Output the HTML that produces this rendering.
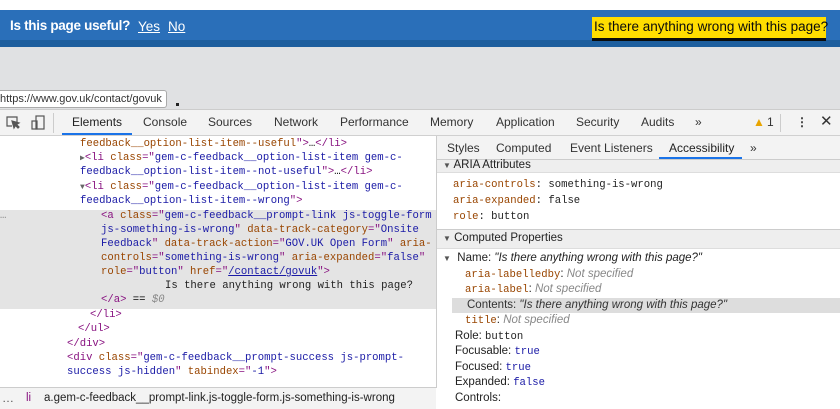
<!DOCTYPE html>
<html><head><meta charset="utf-8"><style>
*{margin:0;padding:0;box-sizing:border-box}
body{width:840px;height:409px;overflow:hidden;background:#fff;position:relative;font-family:"Liberation Sans",sans-serif}
.a{position:absolute;white-space:pre}
.m{font-family:"Liberation Mono",monospace;font-size:10.6px}
.t{color:#881280}.n{color:#994500}.v{color:#1a1aa6}.k{color:#222}
.tab{position:absolute;top:115px;font-size:12px;color:#333}
.rt{position:absolute;top:141px;font-size:12px;color:#333}
.r{position:absolute;font-size:11.5px;color:#222;white-space:pre}
.g{color:#888;font-style:italic}
</style></head><body>
<!-- page -->
<div class="a" style="left:0;top:10px;width:840px;height:31px;background:#2a6fb9"></div>
<div class="a" style="left:0;top:40px;width:840px;height:7px;background:#1d5e9e"></div>
<div class="a" style="left:0;top:47px;width:840px;height:63px;background:#e0e1e3"></div>
<div class="a" style="left:10px;top:18px;font-size:13.5px;font-weight:bold;color:#fff;letter-spacing:-0.3px">Is this page useful?</div>
<div class="a" style="left:138px;top:19px;font-size:13.5px;color:#fff;text-decoration:underline">Yes</div>
<div class="a" style="left:168px;top:19px;font-size:13.5px;color:#fff;text-decoration:underline">No</div>
<div class="a" style="left:592px;top:17px;width:234px;height:21px;background:#ffdd00;box-shadow:0 3px 0 #0b0c0c"></div>
<div class="a" style="left:594px;top:19px;font-size:13.5px;color:#0b0c0c">Is there anything wrong with this page?</div>
<div class="a" style="left:0;top:90px;width:167px;height:18px;background:#fff;border:1px solid #aaa;border-left:none;border-radius:0 3px 3px 0"></div>
<div class="a" style="left:0;top:93px;font-size:11px;color:#333">https://www.gov.uk/contact/govuk</div>
<div class="a" style="left:176px;top:103px;width:3px;height:3px;background:#222"></div>
<!-- toolbar -->
<div class="a" style="left:0;top:109px;width:840px;height:27px;background:#f3f3f3;border-top:1px solid #ccc;border-bottom:1px solid #d0d0d0"></div>
<svg class="a" style="left:3px;top:114px" width="46" height="18" viewBox="0 0 46 18" fill="none" stroke="#555" stroke-width="1.2"><path d="M9 12H4V3h10v5"/><path d="M9 7l2 7 1.5-2.5L15 14l1-1-2.5-2.5L16 9z" fill="#555"/><rect x="33" y="2" width="8" height="13"/><rect x="29" y="7" width="5" height="8"/></svg>
<div class="a" style="left:53px;top:113px;width:1px;height:20px;background:#ccc"></div>
<div class="tab" style="left:72px;color:#222">Elements</div>
<div class="a" style="left:62px;top:133px;width:70px;height:2px;background:#1a73e8"></div>
<div class="tab" style="left:143px">Console</div>
<div class="tab" style="left:208px">Sources</div>
<div class="tab" style="left:274px">Network</div>
<div class="tab" style="left:340px">Performance</div>
<div class="tab" style="left:430px">Memory</div>
<div class="tab" style="left:496px">Application</div>
<div class="tab" style="left:576px">Security</div>
<div class="tab" style="left:641px">Audits</div>
<div class="tab" style="left:695px">»</div>
<div class="tab" style="left:753px;color:#e8a400">▲</div>
<div class="tab" style="left:767px">1</div>
<div class="a" style="left:780px;top:114px;width:1px;height:18px;background:#ccc"></div>
<div class="tab" style="left:796px;font-weight:bold">⋮</div>
<div class="tab" style="left:820px;font-size:15px;top:112px">✕</div>
<!-- left pane -->
<div class="a" style="left:0;top:210px;width:436px;height:99px;background:#e4e4e4"></div>
<div class="a" style="left:436px;top:136px;width:1px;height:252px;background:#ccc"></div>
<div class="a m" style="left:80px;top:138px"><span class="n">feedback__option-list-item--useful</span><span class="t">"&gt;</span>…<span class="t">&lt;/li&gt;</span></div>
<div class="a m" style="left:80px;top:152px"><span style="font-size:8px;color:#666">▶</span><span class="t">&lt;li </span><span class="n">class</span><span class="t">="</span><span class="v">gem-c-feedback__option-list-item gem-c-</span></div>
<div class="a m" style="left:80px;top:166px"><span class="v">feedback__option-list-item--not-useful</span><span class="t">"&gt;</span>…<span class="t">&lt;/li&gt;</span></div>
<div class="a m" style="left:80px;top:181px"><span style="font-size:8px;color:#666">▼</span><span class="t">&lt;li </span><span class="n">class</span><span class="t">="</span><span class="v">gem-c-feedback__option-list-item gem-c-</span></div>
<div class="a m" style="left:80px;top:195px"><span class="v">feedback__option-list-item--wrong</span><span class="t">"&gt;</span></div>
<div class="a m" style="left:0;top:210px;color:#888">…</div>
<div class="a m" style="left:101px;top:210px"><span class="t">&lt;a </span><span class="n">class</span><span class="t">="</span><span class="v">gem-c-feedback__prompt-link js-toggle-form</span></div>
<div class="a m" style="left:101px;top:224px"><span class="v">js-something-is-wrong</span><span class="t">" </span><span class="n">data-track-category</span><span class="t">="</span><span class="v">Onsite</span></div>
<div class="a m" style="left:101px;top:238px"><span class="v">Feedback</span><span class="t">" </span><span class="n">data-track-action</span><span class="t">="</span><span class="v">GOV.UK Open Form</span><span class="t">" </span><span class="n">aria-</span></div>
<div class="a m" style="left:101px;top:252px"><span class="n">controls</span><span class="t">="</span><span class="v">something-is-wrong</span><span class="t">" </span><span class="n">aria-expanded</span><span class="t">="</span><span class="v">false</span><span class="t">"</span></div>
<div class="a m" style="left:101px;top:266px"><span class="n">role</span><span class="t">="</span><span class="v">button</span><span class="t">" </span><span class="n">href</span><span class="t">="</span><span class="v" style="text-decoration:underline;color:#1a1aa6">/contact/govuk</span><span class="t">"&gt;</span></div>
<div class="a m k" style="left:165px;top:280px">Is there anything wrong with this page?</div>
<div class="a m" style="left:101px;top:294px"><span class="t">&lt;/a&gt;</span> == <span class="g">$0</span></div>
<div class="a m t" style="left:90px;top:309px">&lt;/li&gt;</div>
<div class="a m t" style="left:78px;top:323px">&lt;/ul&gt;</div>
<div class="a m t" style="left:67px;top:338px">&lt;/div&gt;</div>
<div class="a m" style="left:67px;top:352px"><span class="t">&lt;div </span><span class="n">class</span><span class="t">="</span><span class="v">gem-c-feedback__prompt-success js-prompt-</span></div>
<div class="a m" style="left:67px;top:366px"><span class="v">success js-hidden</span><span class="t">" </span><span class="n">tabindex</span><span class="t">="</span><span class="v">-1</span><span class="t">"&gt;</span></div>
<!-- breadcrumb -->
<div class="a" style="left:0;top:387px;width:436px;height:22px;background:#f3f3f3;border-top:1px solid #ccc"></div>
<div class="a" style="left:2px;top:391px;font-size:12px;color:#555">…</div>
<div class="a" style="left:26px;top:392px;font-size:11.5px;color:#881280">li</div>
<div class="a" style="left:44px;top:392px;font-size:11.5px;color:#222">a.gem-c-feedback__prompt-link.js-toggle-form.js-something-is-wrong</div>
<!-- right pane -->
<div class="a" style="left:437px;top:136px;width:403px;height:24px;background:#f3f3f3;border-bottom:1px solid #ccc"></div>
<div class="rt" style="left:447px">Styles</div>
<div class="rt" style="left:496px">Computed</div>
<div class="rt" style="left:570px">Event Listeners</div>
<div class="rt" style="left:669px;color:#222">Accessibility</div>
<div class="a" style="left:659px;top:157px;width:83px;height:2px;background:#1a73e8"></div>
<div class="rt" style="left:750px">»</div>
<div class="a" style="left:437px;top:160px;width:403px;height:13px;background:#eee;border-bottom:1px solid #ddd"></div>
<div class="r" style="left:443px;top:159px"><span style="font-size:8px;color:#555">▼</span> ARIA Attributes</div>
<div class="r m" style="left:453px;top:179px;font-size:10.6px"><span class="n">aria-controls</span>: something-is-wrong</div>
<div class="r m" style="left:453px;top:195px;font-size:10.6px"><span class="n">aria-expanded</span>: false</div>
<div class="r m" style="left:453px;top:211px;font-size:10.6px"><span class="n">role</span>: button</div>
<div class="a" style="left:437px;top:229px;width:403px;height:20px;background:#eee;border-top:1px solid #ccc;border-bottom:1px solid #ddd"></div>
<div class="r" style="left:443px;top:232px"><span style="font-size:8px;color:#555">▼</span> Computed Properties</div>
<div class="r" style="left:443px;top:252px"><span style="font-size:8px;color:#555">▼</span>  Name: <i>"Is there anything wrong with this page?"</i></div>
<div class="r" style="left:465px;top:268px"><span class="m n">aria-labelledby</span>: <span class="g">Not specified</span></div>
<div class="r" style="left:465px;top:283px"><span class="m n">aria-label</span>: <span class="g">Not specified</span></div>
<div class="a" style="left:452px;top:298px;width:388px;height:15px;background:#ddd"></div>
<div class="r" style="left:467px;top:299px;color:#333">Contents: <i>"Is there anything wrong with this page?"</i></div>
<div class="r" style="left:465px;top:314px"><span class="m n">title</span>: <span class="g">Not specified</span></div>
<div class="r" style="left:455px;top:330px">Role: <span class="m">button</span></div>
<div class="r" style="left:455px;top:345px">Focusable: <span class="m v">true</span></div>
<div class="r" style="left:455px;top:361px">Focused: <span class="m v">true</span></div>
<div class="r" style="left:455px;top:376px">Expanded: <span class="m v">false</span></div>
<div class="r" style="left:455px;top:392px">Controls:</div>
</body></html>
